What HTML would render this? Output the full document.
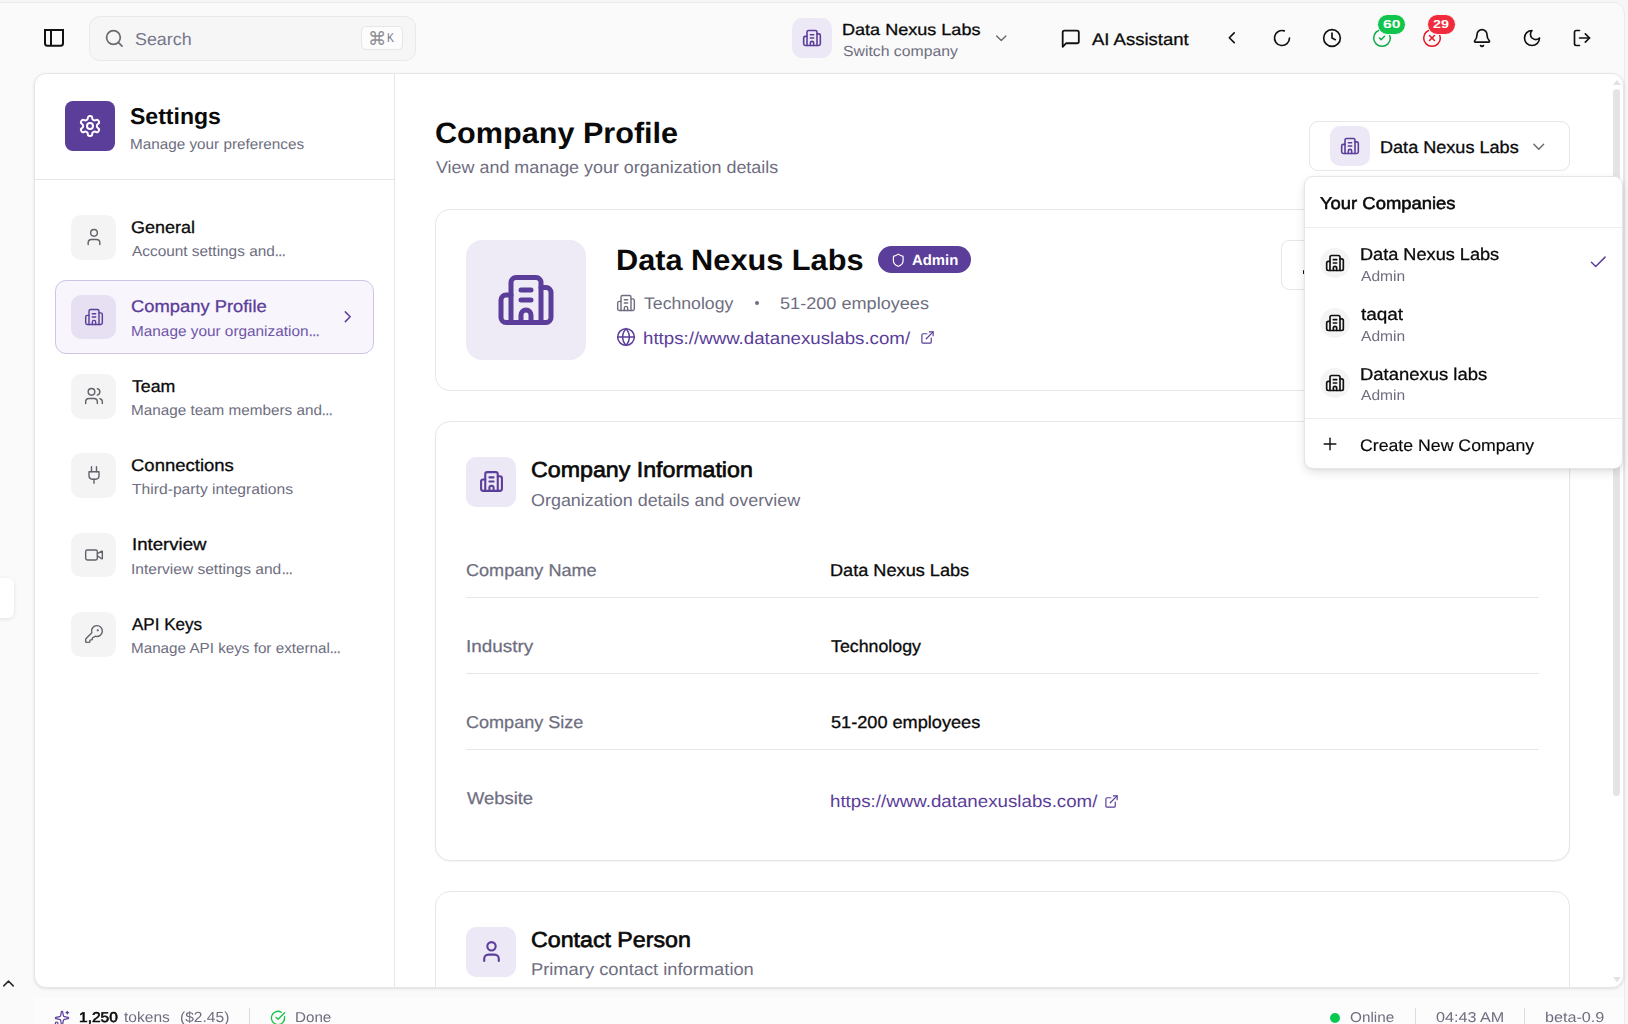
<!DOCTYPE html>
<html lang="en"><head><meta charset="utf-8"><title>Company Profile - Settings</title>
<style>
html,body{margin:0;padding:0;}
body{width:1628px;height:1024px;overflow:hidden;position:relative;background:#f6f6f6;font-family:"Liberation Sans",sans-serif;}
.frame{position:absolute;left:-12px;top:2px;width:1637px;height:1040px;border:1px solid #ebebed;border-radius:12px;background:#fafafa;box-sizing:border-box;}
.t{position:absolute;display:flex;align-items:baseline;white-space:nowrap;line-height:1;transform-origin:0 0;text-rendering:geometricPrecision;}
.t>i{display:block;width:0;height:30px;}
.layer{position:absolute;left:0;top:0;width:1628px;height:1024px;will-change:transform;}
.b{position:absolute;}
.i{position:absolute;display:block;overflow:visible;}
.clip{position:absolute;left:396px;top:74px;width:1226px;height:913px;overflow:hidden;}
.clip > *{margin-left:-396px;margin-top:-74px;}
</style></head><body>
<div class="frame"></div>
<svg class="i" style="left:40px;top:24px;color:#111" width="28" height="28" viewBox="40 24 28 28" fill="none" stroke="currentColor" stroke-width="2" stroke-linejoin="miter"><path d="M45 30H63V43.300a2.500 2.500 0 0 1-2.500 2.500H47.500a2.500 2.500 0 0 1-2.500-2.500Z"/><path d="M51 30V45.800"/></svg>
<div class="b" style="left:89px;top:16px;width:327px;height:45px;background:#f6f6f6;border:1px solid #e9e9eb;border-radius:11px;box-sizing:border-box;"></div>
<svg class="i" style="left:103.7px;top:27.8px;color:#6a6a70;" width="20.6" height="20.6" viewBox="0 0 24 24" fill="none" stroke="currentColor" stroke-width="2" stroke-linecap="round" stroke-linejoin="round"><circle cx="11" cy="11" r="8"/><path d="m21 21-4.3-4.3"/></svg>
<div class="t" style="left:135.04px;top:15px;font-size:17.3px;color:#75758a;transform:scaleX(1.0337);"><i></i>Search</div>
<div class="b" style="left:360.5px;top:25.5px;width:42px;height:24.5px;background:#fcfcfc;border:1px solid #e6e6e9;border-radius:5px;box-sizing:border-box;"></div>
<div class="t" style="left:367.90px;top:15px;font-size:18.5px;color:#8e8e96;transform:scaleX(0.9894);font-family:"DejaVu Sans",sans-serif;"><i></i>⌘</div>
<div class="t" style="left:387.44px;top:12px;font-size:12.8px;color:#75758a;transform:scaleX(0.8163);"><i></i>K</div>
<div class="b" style="left:792px;top:18px;width:40px;height:40px;background:#ece8f6;border-radius:10px;"></div>
<svg class="i" style="left:802px;top:28.2px;color:#5b3d9a;" width="20" height="20" viewBox="0 0 24 24" fill="none" stroke="currentColor" stroke-width="1.9" stroke-linecap="round" stroke-linejoin="round"><path d="M10 12h4"/><path d="M10 8h4"/><path d="M14 21v-3a2 2 0 0 0-4 0v3"/><path d="M6 10H4a2 2 0 0 0-2 2v7a2 2 0 0 0 2 2h16a2 2 0 0 0 2-2V9a2 2 0 0 0-2-2h-2"/><path d="M6 21V5a2 2 0 0 1 2-2h8a2 2 0 0 1 2 2v16"/></svg>
<div class="t" style="left:842.29px;top:5px;font-size:16px;color:#0a0a0a;transform:scaleX(1.1282);-webkit-text-stroke:0.3px currentColor;"><i></i>Data Nexus Labs</div>
<div class="t" style="left:842.51px;top:26px;font-size:14.6px;color:#6e6e80;transform:scaleX(1.0808);"><i></i>Switch company</div>
<svg class="i" style="left:991.75px;top:28.75px;color:#666;" width="18.5" height="18.5" viewBox="0 0 24 24" fill="none" stroke="currentColor" stroke-width="1.7" stroke-linecap="round" stroke-linejoin="round"><path d="m6 9 6 6 6-6"/></svg>
<svg class="i" style="left:1060.25px;top:27.65px;color:#111;" width="21.5" height="21.5" viewBox="0 0 24 24" fill="none" stroke="currentColor" stroke-width="2" stroke-linecap="round" stroke-linejoin="round"><path d="M21 15a2 2 0 0 1-2 2H7l-4 4V5a2 2 0 0 1 2-2h14a2 2 0 0 1 2 2z"/></svg>
<div class="t" style="left:1092.00px;top:15px;font-size:16.8px;color:#0a0a0a;transform:scaleX(1.1021);-webkit-text-stroke:0.3px currentColor;"><i></i>AI Assistant</div>
<svg class="i" style="left:1222.25px;top:28.25px;color:#111;" width="19.5" height="19.5" viewBox="0 0 24 24" fill="none" stroke="currentColor" stroke-width="2" stroke-linecap="round" stroke-linejoin="round"><path d="m15 18-6-6 6-6"/></svg>
<svg class="i" style="left:1272px;top:28px;color:#111;" width="20" height="20" viewBox="0 0 24 24" fill="none" stroke="currentColor" stroke-width="2" stroke-linecap="round" stroke-linejoin="round"><path d="M21 12a9 9 0 1 1-6.219-8.56"/></svg>
<svg class="i" style="left:1322px;top:28px;color:#111;" width="20" height="20" viewBox="0 0 24 24" fill="none" stroke="currentColor" stroke-width="2" stroke-linecap="round" stroke-linejoin="round"><circle cx="12" cy="12" r="10"/><path d="M12 6v6l4 2"/></svg>
<svg class="i" style="left:1372px;top:28px;color:#0cab45;" width="20" height="20" viewBox="0 0 24 24" fill="none" stroke="currentColor" stroke-width="1.8" stroke-linecap="round" stroke-linejoin="round"><circle cx="12" cy="12" r="10"/><path d="m9 12 2 2 4-4"/></svg>
<svg class="i" style="left:1422px;top:28px;color:#e81422;" width="20" height="20" viewBox="0 0 24 24" fill="none" stroke="currentColor" stroke-width="1.8" stroke-linecap="round" stroke-linejoin="round"><circle cx="12" cy="12" r="10"/><path d="m15 9-6 6"/><path d="m9 9 6 6"/></svg>
<svg class="i" style="left:1472px;top:28px;color:#111;" width="20" height="20" viewBox="0 0 24 24" fill="none" stroke="currentColor" stroke-width="2" stroke-linecap="round" stroke-linejoin="round"><path d="M10.268 21a2 2 0 0 0 3.464 0"/><path d="M3.262 15.326A1 1 0 0 0 4 17h16a1 1 0 0 0 .74-1.673C19.41 13.956 18 12.499 18 8A6 6 0 0 0 6 8c0 4.499-1.411 5.956-2.738 7.326"/></svg>
<svg class="i" style="left:1522px;top:28px;color:#111;" width="20" height="20" viewBox="0 0 24 24" fill="none" stroke="currentColor" stroke-width="2" stroke-linecap="round" stroke-linejoin="round"><path d="M12 3a6 6 0 0 0 9 9 9 9 0 1 1-9-9Z"/></svg>
<svg class="i" style="left:1572px;top:28px;color:#111;" width="20" height="20" viewBox="0 0 24 24" fill="none" stroke="currentColor" stroke-width="2" stroke-linecap="round" stroke-linejoin="round"><path d="M9 21H5a2 2 0 0 1-2-2V5a2 2 0 0 1 2-2h4"/><path d="m16 17 5-5-5-5"/><path d="M21 12H9"/></svg>
<div class="b" style="left:1377px;top:14px;width:29px;height:21px;background:#10c44c;border:1px solid #fafafa;border-radius:11px;box-sizing:border-box;"></div>
<div class="b" style="left:1427px;top:14px;width:29px;height:21px;background:#f02b3c;border:1px solid #fafafa;border-radius:11px;box-sizing:border-box;"></div>
<div class="t" style="left:1382.86px;top:-2px;font-size:11.6px;color:#fff;font-weight:700;transform:scaleX(1.3525);"><i></i>60</div>
<div class="t" style="left:1433.21px;top:-2px;font-size:11.6px;color:#fff;font-weight:700;transform:scaleX(1.2313);"><i></i>29</div>
<div class="b" style="left:34px;top:73px;width:1590px;height:915px;background:#fff;border:1px solid #e6e6e9;border-radius:12px;box-sizing:border-box;box-shadow:0 1px 3px rgba(0,0,0,.11);"></div>
<div class="b" style="left:394px;top:74px;width:1px;height:913px;background:#e6e6e9;"></div>
<div class="b" style="left:35px;top:179px;width:359px;height:1px;background:#e6e6e9;"></div>
<div class="b" style="left:65px;top:101px;width:50px;height:50px;background:#5b3d9a;border-radius:8px;"></div>
<svg class="i" style="left:78.2px;top:114.2px;color:#fff;" width="24" height="24" viewBox="0 0 24 24" fill="none" stroke="currentColor" stroke-width="2" stroke-linecap="round" stroke-linejoin="round"><path d="M12.22 2h-.44a2 2 0 0 0-2 2v.18a2 2 0 0 1-1 1.730l-.43.250a2 2 0 0 1-2 0l-.15-.08a2 2 0 0 0-2.73.73l-.22.38a2 2 0 0 0 .73 2.73l.15.1a2 2 0 0 1 1 1.720v.51a2 2 0 0 1-1 1.740l-.15.09a2 2 0 0 0-.73 2.73l.22.38a2 2 0 0 0 2.73.73l.15-.08a2 2 0 0 1 2 0l.43.25a2 2 0 0 1 1 1.730V20a2 2 0 0 0 2 2h.44a2 2 0 0 0 2-2v-.18a2 2 0 0 1 1-1.730l.43-.25a2 2 0 0 1 2 0l.15.08a2 2 0 0 0 2.73-.73l.22-.39a2 2 0 0 0-.73-2.73l-.15-.08a2 2 0 0 1-1-1.740v-.5a2 2 0 0 1 1-1.740l.15-.09a2 2 0 0 0 .73-2.73l-.22-.38a2 2 0 0 0-2.73-.73l-.15.08a2 2 0 0 1-2 0l-.43-.25a2 2 0 0 1-1-1.730V4a2 2 0 0 0-2-2z"/><circle cx="12" cy="12" r="3"/></svg>
<div class="t" style="left:130.34px;top:94px;font-size:22.8px;color:#0a0a0a;font-weight:700;transform:scaleX(1.0106);"><i></i>Settings</div>
<div class="t" style="left:130.11px;top:119px;font-size:14.6px;color:#6e6e80;transform:scaleX(1.0469);"><i></i>Manage your preferences</div>
<div class="b" style="left:71px;top:215px;width:45px;height:44.6px;background:#f4f4f5;border-radius:10px;"></div>
<svg class="i" style="left:83.8px;top:227.3px;color:#62626a;" width="20" height="20" viewBox="0 0 24 24" fill="none" stroke="currentColor" stroke-width="1.7" stroke-linecap="round" stroke-linejoin="round"><path d="M19 21v-2a4 4 0 0 0-4-4H9a4 4 0 0 0-4 4v2"/><circle cx="12" cy="7" r="4"/></svg>
<div class="t" style="left:131.06px;top:203px;font-size:17px;color:#0a0a0a;transform:scaleX(1.0570);-webkit-text-stroke:0.3px currentColor;"><i></i>General</div>
<div class="t" style="left:131.80px;top:226px;font-size:14.6px;color:#6e6e80;transform:scaleX(1.0540);"><i></i>Account settings and</div>
<div class="t" style="left:274.72px;top:226px;font-size:14.6px;color:#6e6e80;transform:scaleX(0.8548);-webkit-text-stroke:0.3px currentColor;"><i></i>...</div>
<div class="b" style="left:55px;top:280px;width:319px;height:73.5px;background:#f8f5fc;border:1px solid #cfc4e6;border-radius:11px;box-sizing:border-box;"></div>
<svg class="i" style="left:338.25px;top:307.45px;color:#5b3d9a;" width="19.5" height="19.5" viewBox="0 0 24 24" fill="none" stroke="currentColor" stroke-width="1.8" stroke-linecap="round" stroke-linejoin="round"><path d="m9 18 6-6-6-6"/></svg>
<div class="b" style="left:71px;top:294.5px;width:45px;height:44.6px;background:#e6e0f2;border-radius:10px;"></div>
<svg class="i" style="left:83.8px;top:306.8px;color:#5b3d9a;" width="20" height="20" viewBox="0 0 24 24" fill="none" stroke="currentColor" stroke-width="1.7" stroke-linecap="round" stroke-linejoin="round"><path d="M10 12h4"/><path d="M10 8h4"/><path d="M14 21v-3a2 2 0 0 0-4 0v3"/><path d="M6 10H4a2 2 0 0 0-2 2v7a2 2 0 0 0 2 2h16a2 2 0 0 0 2-2V9a2 2 0 0 0-2-2h-2"/><path d="M6 21V5a2 2 0 0 1 2-2h8a2 2 0 0 1 2 2v16"/></svg>
<div class="t" style="left:130.94px;top:282px;font-size:17px;color:#5b3d9a;transform:scaleX(1.0799);-webkit-text-stroke:0.3px currentColor;"><i></i>Company Profile</div>
<div class="t" style="left:130.90px;top:306px;font-size:14.6px;color:#6f55a8;transform:scaleX(1.0518);"><i></i>Manage your organization</div>
<div class="t" style="left:308.52px;top:306px;font-size:14.6px;color:#6f55a8;transform:scaleX(0.8548);-webkit-text-stroke:0.3px currentColor;"><i></i>...</div>
<div class="b" style="left:71px;top:374px;width:45px;height:44.6px;background:#f4f4f5;border-radius:10px;"></div>
<svg class="i" style="left:83.8px;top:386.3px;color:#62626a;" width="20" height="20" viewBox="0 0 24 24" fill="none" stroke="currentColor" stroke-width="1.7" stroke-linecap="round" stroke-linejoin="round"><path d="M16 21v-2a4 4 0 0 0-4-4H6a4 4 0 0 0-4 4v2"/><circle cx="9" cy="7" r="4"/><path d="M22 21v-2a4 4 0 0 0-3-3.870"/><path d="M16 3.130a4 4 0 0 1 0 7.750"/></svg>
<div class="t" style="left:131.62px;top:362px;font-size:17px;color:#0a0a0a;transform:scaleX(1.0439);-webkit-text-stroke:0.3px currentColor;"><i></i>Team</div>
<div class="t" style="left:130.91px;top:385px;font-size:14.6px;color:#6e6e80;transform:scaleX(1.0458);"><i></i>Manage team members and</div>
<div class="t" style="left:321.92px;top:385px;font-size:14.6px;color:#6e6e80;transform:scaleX(0.8548);-webkit-text-stroke:0.3px currentColor;"><i></i>...</div>
<div class="b" style="left:71px;top:453px;width:45px;height:44.6px;background:#f4f4f5;border-radius:10px;"></div>
<svg class="i" style="left:83.8px;top:465.3px;color:#62626a;" width="20" height="20" viewBox="0 0 24 24" fill="none" stroke="currentColor" stroke-width="1.7" stroke-linecap="round" stroke-linejoin="round"><path d="M12 22v-5"/><path d="M9 8V2"/><path d="M15 8V2"/><path d="M18 8v5a4 4 0 0 1-4 4h-4a4 4 0 0 1-4-4V8Z"/></svg>
<div class="t" style="left:131.03px;top:441px;font-size:17px;color:#0a0a0a;transform:scaleX(1.0883);-webkit-text-stroke:0.3px currentColor;"><i></i>Connections</div>
<div class="t" style="left:131.56px;top:464px;font-size:14.6px;color:#6e6e80;transform:scaleX(1.0734);"><i></i>Third-party integrations</div>
<div class="b" style="left:71px;top:532.5px;width:45px;height:44.6px;background:#f4f4f5;border-radius:10px;"></div>
<svg class="i" style="left:83.8px;top:544.8px;color:#62626a;" width="20" height="20" viewBox="0 0 24 24" fill="none" stroke="currentColor" stroke-width="1.7" stroke-linecap="round" stroke-linejoin="round"><path d="m16 13 5.223 3.482a.5.5 0 0 0 .777-.416V7.870a.5.5 0 0 0-.752-.432L16 10.500"/><rect x="2" y="6" width="14" height="12" rx="2"/></svg>
<div class="t" style="left:131.64px;top:520px;font-size:17px;color:#0a0a0a;transform:scaleX(1.0956);-webkit-text-stroke:0.3px currentColor;"><i></i>Interview</div>
<div class="t" style="left:131.29px;top:544px;font-size:14.6px;color:#6e6e80;transform:scaleX(1.0643);"><i></i>Interview settings and</div>
<div class="t" style="left:281.62px;top:544px;font-size:14.6px;color:#6e6e80;transform:scaleX(0.8548);-webkit-text-stroke:0.3px currentColor;"><i></i>...</div>
<div class="b" style="left:71px;top:612px;width:45px;height:44.6px;background:#f4f4f5;border-radius:10px;"></div>
<svg class="i" style="left:83.8px;top:624.3px;color:#62626a;" width="20" height="20" viewBox="0 0 24 24" fill="none" stroke="currentColor" stroke-width="1.7" stroke-linecap="round" stroke-linejoin="round"><path d="M2.586 17.414A2 2 0 0 0 2 18.828V21a1 1 0 0 0 1 1h3a1 1 0 0 0 1-1v-1a1 1 0 0 1 1-1h1a1 1 0 0 0 1-1v-1a1 1 0 0 1 1-1h.172a2 2 0 0 0 1.414-.586l.814-.814a6.500 6.500 0 1 0-4-4z"/><circle cx="16.500" cy="7.500" r=".5" fill="currentColor"/></svg>
<div class="t" style="left:131.90px;top:600px;font-size:17px;color:#0a0a0a;transform:scaleX(1.0016);-webkit-text-stroke:0.3px currentColor;"><i></i>API Keys</div>
<div class="t" style="left:130.91px;top:623px;font-size:14.6px;color:#6e6e80;transform:scaleX(1.0429);"><i></i>Manage API keys for external</div>
<div class="t" style="left:329.72px;top:623px;font-size:14.6px;color:#6e6e80;transform:scaleX(0.8548);-webkit-text-stroke:0.3px currentColor;"><i></i>...</div>
<div class="clip">
<div class="t" style="left:434.64px;top:113px;font-size:29.3px;color:#0a0a0a;font-weight:700;transform:scaleX(1.0443);"><i></i>Company Profile</div>
<div class="t" style="left:436.10px;top:143px;font-size:17.2px;color:#6e6e80;transform:scaleX(1.0422);"><i></i>View and manage your organization details</div>
<div class="b" style="left:1309px;top:121px;width:261px;height:50px;background:#fff;border:1px solid #e6e6e9;border-radius:9px;box-sizing:border-box;"></div>
<div class="b" style="left:1330px;top:126px;width:40px;height:40px;background:#ece8f6;border-radius:10px;"></div>
<svg class="i" style="left:1340px;top:136.2px;color:#5b3d9a;" width="20" height="20" viewBox="0 0 24 24" fill="none" stroke="currentColor" stroke-width="1.9" stroke-linecap="round" stroke-linejoin="round"><path d="M10 12h4"/><path d="M10 8h4"/><path d="M14 21v-3a2 2 0 0 0-4 0v3"/><path d="M6 10H4a2 2 0 0 0-2 2v7a2 2 0 0 0 2 2h16a2 2 0 0 0 2-2V9a2 2 0 0 0-2-2h-2"/><path d="M6 21V5a2 2 0 0 1 2-2h8a2 2 0 0 1 2 2v16"/></svg>
<div class="t" style="left:1379.99px;top:123px;font-size:17.2px;color:#0a0a0a;transform:scaleX(1.0518);-webkit-text-stroke:0.3px currentColor;"><i></i>Data Nexus Labs</div>
<svg class="i" style="left:1529.25px;top:136.65px;color:#666;" width="19.5" height="19.5" viewBox="0 0 24 24" fill="none" stroke="currentColor" stroke-width="1.7" stroke-linecap="round" stroke-linejoin="round"><path d="m6 9 6 6 6-6"/></svg>
<div class="b" style="left:435px;top:209px;width:1135px;height:182px;background:#fff;border:1px solid #e6e6e9;border-radius:15px;box-sizing:border-box;"></div>
<div class="b" style="left:466px;top:240px;width:120px;height:120px;background:#eeebf7;border-radius:16px;"></div>
<svg class="i" style="left:496px;top:270.1px;color:#5b3d9a;" width="60" height="60" viewBox="0 0 24 24" fill="none" stroke="currentColor" stroke-width="2" stroke-linecap="round" stroke-linejoin="round"><path d="M10 12h4"/><path d="M10 8h4"/><path d="M14 21v-3a2 2 0 0 0-4 0v3"/><path d="M6 10H4a2 2 0 0 0-2 2v7a2 2 0 0 0 2 2h16a2 2 0 0 0 2-2V9a2 2 0 0 0-2-2h-2"/><path d="M6 21V5a2 2 0 0 1 2-2h8a2 2 0 0 1 2 2v16"/></svg>
<div class="t" style="left:616.08px;top:240px;font-size:29.3px;color:#0a0a0a;font-weight:700;transform:scaleX(1.0485);"><i></i>Data Nexus Labs</div>
<div class="b" style="left:878px;top:246px;width:93px;height:27px;background:#5b3d9a;border-radius:14px;"></div>
<svg class="i" style="left:891.25px;top:252.55px;color:#fff;" width="14.5" height="14.5" viewBox="0 0 24 24" fill="none" stroke="currentColor" stroke-width="2" stroke-linecap="round" stroke-linejoin="round"><path d="M20 13c0 5-3.500 7.500-7.660 8.950a1 1 0 0 1-.670-.010C7.500 20.500 4 18 4 13V6a1 1 0 0 1 1-1c2 0 4.500-1.200 6.240-2.720a1.170 1.170 0 0 1 1.520 0C14.510 3.810 17 5 19 5a1 1 0 0 1 1 1z"/></svg>
<div class="t" style="left:911.97px;top:235px;font-size:14.8px;color:#fff;font-weight:700;transform:scaleX(1.0046);"><i></i>Admin</div>
<svg class="i" style="left:615.9px;top:292.7px;color:#6e6e80;" width="20" height="20" viewBox="0 0 24 24" fill="none" stroke="currentColor" stroke-width="1.7" stroke-linecap="round" stroke-linejoin="round"><path d="M10 12h4"/><path d="M10 8h4"/><path d="M14 21v-3a2 2 0 0 0-4 0v3"/><path d="M6 10H4a2 2 0 0 0-2 2v7a2 2 0 0 0 2 2h16a2 2 0 0 0 2-2V9a2 2 0 0 0-2-2h-2"/><path d="M6 21V5a2 2 0 0 1 2-2h8a2 2 0 0 1 2 2v16"/></svg>
<div class="t" style="left:644.02px;top:279px;font-size:16.8px;color:#6e6e80;transform:scaleX(1.0516);"><i></i>Technology</div>
<div class="b" style="left:755.2px;top:301.2px;width:4px;height:4px;background:#6e6e80;border-radius:2px;"></div>
<div class="t" style="left:780.13px;top:279px;font-size:16.8px;color:#6e6e80;transform:scaleX(1.0789);"><i></i>51-200 employees</div>
<svg class="i" style="left:615.9px;top:327.1px;color:#5b3d9a;" width="20" height="20" viewBox="0 0 24 24" fill="none" stroke="currentColor" stroke-width="1.8" stroke-linecap="round" stroke-linejoin="round"><circle cx="12" cy="12" r="10"/><path d="M12 2a14.500 14.500 0 0 0 0 20 14.500 14.500 0 0 0 0-20"/><path d="M2 12h20"/></svg>
<div class="t" style="left:643.43px;top:314px;font-size:17.2px;color:#5b3d9a;transform:scaleX(1.0880);"><i></i>https://www.datanexuslabs.com/</div>
<svg class="i" style="left:920.3px;top:329.9px;color:#5b3d9a;" width="15" height="15" viewBox="0 0 24 24" fill="none" stroke="currentColor" stroke-width="1.9" stroke-linecap="round" stroke-linejoin="round"><path d="M15 3h6v6"/><path d="M10 14 21 3"/><path d="M18 13v6a2 2 0 0 1-2 2H5a2 2 0 0 1-2-2V8a2 2 0 0 1 2-2h6"/></svg>
<div class="b" style="left:1281px;top:240px;width:120px;height:50px;background:#fff;border:1px solid #e6e6e9;border-radius:8px;box-sizing:border-box;"></div>
<div class="b" style="left:1302.9px;top:269.5px;width:1.4px;height:4.5px;background:#111;border-radius:1px;"></div>
<div class="b" style="left:435px;top:421px;width:1135px;height:440px;background:#fff;border:1px solid #e6e6e9;border-radius:15px;box-sizing:border-box;box-shadow:0 1px 2px rgba(0,0,0,.05);"></div>
<div class="b" style="left:466px;top:457px;width:50px;height:50px;background:#ece8f6;border-radius:10px;"></div>
<svg class="i" style="left:478.9px;top:469px;color:#5b3d9a;" width="25" height="25" viewBox="0 0 24 24" fill="none" stroke="currentColor" stroke-width="2" stroke-linecap="round" stroke-linejoin="round"><path d="M10 12h4"/><path d="M10 8h4"/><path d="M14 21v-3a2 2 0 0 0-4 0v3"/><path d="M6 10H4a2 2 0 0 0-2 2v7a2 2 0 0 0 2 2h16a2 2 0 0 0 2-2V9a2 2 0 0 0-2-2h-2"/><path d="M6 21V5a2 2 0 0 1 2-2h8a2 2 0 0 1 2 2v16"/></svg>
<div class="t" style="left:531.01px;top:447px;font-size:21.6px;color:#0a0a0a;transform:scaleX(1.0745);-webkit-text-stroke:0.65px currentColor;"><i></i>Company Information</div>
<div class="t" style="left:531.16px;top:476px;font-size:17.2px;color:#6e6e80;transform:scaleX(1.0433);"><i></i>Organization details and overview</div>
<div class="t" style="left:465.55px;top:546px;font-size:17.2px;color:#6e6e80;transform:scaleX(1.0516);-webkit-text-stroke:0.25px currentColor;"><i></i>Company Name</div>
<div class="t" style="left:830.28px;top:546px;font-size:17.2px;color:#0a0a0a;transform:scaleX(1.0557);-webkit-text-stroke:0.3px currentColor;"><i></i>Data Nexus Labs</div>
<div class="b" style="left:466px;top:597px;width:1073px;height:1px;background:#e6e6e9;"></div>
<div class="t" style="left:466.22px;top:622px;font-size:17.2px;color:#6e6e80;transform:scaleX(1.1013);-webkit-text-stroke:0.25px currentColor;"><i></i>Industry</div>
<div class="t" style="left:830.82px;top:622px;font-size:17.2px;color:#0a0a0a;transform:scaleX(1.0340);-webkit-text-stroke:0.3px currentColor;"><i></i>Technology</div>
<div class="b" style="left:466px;top:673px;width:1073px;height:1px;background:#e6e6e9;"></div>
<div class="t" style="left:465.55px;top:698px;font-size:17.2px;color:#6e6e80;transform:scaleX(1.0503);-webkit-text-stroke:0.25px currentColor;"><i></i>Company Size</div>
<div class="t" style="left:830.53px;top:698px;font-size:17.2px;color:#0a0a0a;transform:scaleX(1.0553);-webkit-text-stroke:0.3px currentColor;"><i></i>51-200 employees</div>
<div class="b" style="left:466px;top:749px;width:1073px;height:1px;background:#e6e6e9;"></div>
<div class="t" style="left:466.70px;top:774px;font-size:17.2px;color:#6e6e80;transform:scaleX(1.0700);-webkit-text-stroke:0.25px currentColor;"><i></i>Website</div>
<div class="t" style="left:830.13px;top:777px;font-size:17.2px;color:#5b3d9a;transform:scaleX(1.0892);"><i></i>https://www.datanexuslabs.com/</div>
<svg class="i" style="left:1104px;top:793.5px;color:#5b3d9a;" width="15" height="15" viewBox="0 0 24 24" fill="none" stroke="currentColor" stroke-width="1.9" stroke-linecap="round" stroke-linejoin="round"><path d="M15 3h6v6"/><path d="M10 14 21 3"/><path d="M18 13v6a2 2 0 0 1-2 2H5a2 2 0 0 1-2-2V8a2 2 0 0 1 2-2h6"/></svg>
<div class="b" style="left:435px;top:891px;width:1135px;height:300px;background:#fff;border:1px solid #e6e6e9;border-radius:15px;box-sizing:border-box;"></div>
<div class="b" style="left:466px;top:927px;width:50px;height:50px;background:#ece8f6;border-radius:10px;"></div>
<svg class="i" style="left:478.9px;top:939.3px;color:#5b3d9a;" width="25" height="25" viewBox="0 0 24 24" fill="none" stroke="currentColor" stroke-width="2" stroke-linecap="round" stroke-linejoin="round"><path d="M19 21v-2a4 4 0 0 0-4-4H9a4 4 0 0 0-4 4v2"/><circle cx="12" cy="7" r="4"/></svg>
<div class="t" style="left:530.81px;top:917px;font-size:21.6px;color:#0a0a0a;transform:scaleX(1.0740);-webkit-text-stroke:0.65px currentColor;"><i></i>Contact Person</div>
<div class="t" style="left:530.87px;top:945px;font-size:17.2px;color:#6e6e80;transform:scaleX(1.0651);"><i></i>Primary contact information</div>
</div>
<div class="b" style="left:1613px;top:89px;width:7px;height:707px;background:#e4e4e7;border-radius:3.5px;"></div>
<div class="b" style="left:1612.5px;top:79.500px;width:0;height:0;border-left:4px solid transparent;border-right:4px solid transparent;border-bottom:5.5px solid #e2e2e5;"></div>
<div class="b" style="left:1612.5px;top:977px;width:0;height:0;border-left:4px solid transparent;border-right:4px solid transparent;border-top:5.5px solid #e2e2e5;"></div>
<div class="layer">
<div class="b" style="left:1304px;top:176px;width:319px;height:293px;background:#fff;border:1px solid #e6e6e9;border-radius:9px;box-sizing:border-box;box-shadow:0 4px 10px rgba(0,0,0,.10),0 1px 3px rgba(0,0,0,.06);"></div>
<div class="t" style="left:1320.01px;top:179px;font-size:17.2px;color:#0a0a0a;transform:scaleX(1.0722);-webkit-text-stroke:0.55px currentColor;"><i></i>Your Companies</div>
<div class="b" style="left:1305px;top:227px;width:317px;height:1px;background:#ededf0;"></div>
<div class="b" style="left:1320px;top:248px;width:30px;height:30px;background:#f4f4f5;border-radius:15px;"></div>
<svg class="i" style="left:1325px;top:253px;color:#111;" width="20" height="20" viewBox="0 0 24 24" fill="none" stroke="currentColor" stroke-width="2" stroke-linecap="round" stroke-linejoin="round"><path d="M10 12h4"/><path d="M10 8h4"/><path d="M14 21v-3a2 2 0 0 0-4 0v3"/><path d="M6 10H4a2 2 0 0 0-2 2v7a2 2 0 0 0 2 2h16a2 2 0 0 0 2-2V9a2 2 0 0 0-2-2h-2"/><path d="M6 21V5a2 2 0 0 1 2-2h8a2 2 0 0 1 2 2v16"/></svg>
<div class="t" style="left:1359.78px;top:230px;font-size:17.2px;color:#0a0a0a;transform:scaleX(1.0557);-webkit-text-stroke:0.3px currentColor;"><i></i>Data Nexus Labs</div>
<div class="t" style="left:1360.50px;top:251px;font-size:14.6px;color:#6e6e80;transform:scaleX(1.0675);"><i></i>Admin</div>
<div class="b" style="left:1320px;top:308px;width:30px;height:30px;background:#f4f4f5;border-radius:15px;"></div>
<svg class="i" style="left:1325px;top:313px;color:#111;" width="20" height="20" viewBox="0 0 24 24" fill="none" stroke="currentColor" stroke-width="2" stroke-linecap="round" stroke-linejoin="round"><path d="M10 12h4"/><path d="M10 8h4"/><path d="M14 21v-3a2 2 0 0 0-4 0v3"/><path d="M6 10H4a2 2 0 0 0-2 2v7a2 2 0 0 0 2 2h16a2 2 0 0 0 2-2V9a2 2 0 0 0-2-2h-2"/><path d="M6 21V5a2 2 0 0 1 2-2h8a2 2 0 0 1 2 2v16"/></svg>
<div class="t" style="left:1361.20px;top:290px;font-size:17.2px;color:#0a0a0a;transform:scaleX(1.1014);-webkit-text-stroke:0.3px currentColor;"><i></i>taqat</div>
<div class="t" style="left:1360.50px;top:311px;font-size:14.6px;color:#6e6e80;transform:scaleX(1.0675);"><i></i>Admin</div>
<div class="b" style="left:1320px;top:368px;width:30px;height:30px;background:#f4f4f5;border-radius:15px;"></div>
<svg class="i" style="left:1325px;top:373px;color:#111;" width="20" height="20" viewBox="0 0 24 24" fill="none" stroke="currentColor" stroke-width="2" stroke-linecap="round" stroke-linejoin="round"><path d="M10 12h4"/><path d="M10 8h4"/><path d="M14 21v-3a2 2 0 0 0-4 0v3"/><path d="M6 10H4a2 2 0 0 0-2 2v7a2 2 0 0 0 2 2h16a2 2 0 0 0 2-2V9a2 2 0 0 0-2-2h-2"/><path d="M6 21V5a2 2 0 0 1 2-2h8a2 2 0 0 1 2 2v16"/></svg>
<div class="t" style="left:1359.76px;top:350px;font-size:17.2px;color:#0a0a0a;transform:scaleX(1.0730);-webkit-text-stroke:0.3px currentColor;"><i></i>Datanexus labs</div>
<div class="t" style="left:1360.50px;top:370px;font-size:14.6px;color:#6e6e80;transform:scaleX(1.0675);"><i></i>Admin</div>
<svg class="i" style="left:1587.65px;top:252.45px;color:#5b3d9a;" width="20.5" height="20.5" viewBox="0 0 24 24" fill="none" stroke="currentColor" stroke-width="1.7" stroke-linecap="round" stroke-linejoin="round"><path d="M20 6 9 17l-5-5"/></svg>
<div class="b" style="left:1305px;top:418px;width:317px;height:1px;background:#ededf0;"></div>
<svg class="i" style="left:1320.2px;top:434.2px;color:#111;" width="20" height="20" viewBox="0 0 24 24" fill="none" stroke="currentColor" stroke-width="1.7" stroke-linecap="round" stroke-linejoin="round"><path d="M5 12h14"/><path d="M12 5v14"/></svg>
<div class="t" style="left:1359.77px;top:421px;font-size:16.8px;color:#0a0a0a;transform:scaleX(1.0548);-webkit-text-stroke:0.15px currentColor;"><i></i>Create New Company</div>
</div>
<div class="layer">
<div class="b" style="left:34px;top:998px;width:1590px;height:26px;background:#fcfcfc;"></div>
<svg class="i" style="left:53.6px;top:1009.6px;color:#5b3d9a;" width="16" height="16" viewBox="0 0 24 24" fill="none" stroke="currentColor" stroke-width="1.8" stroke-linecap="round" stroke-linejoin="round"><path d="M11.017 2.814a1 1 0 0 1 1.966 0l1.051 5.558a2 2 0 0 0 1.594 1.594l5.558 1.051a1 1 0 0 1 0 1.966l-5.558 1.051a2 2 0 0 0-1.594 1.594l-1.051 5.558a1 1 0 0 1-1.966 0l-1.051-5.558a2 2 0 0 0-1.594-1.594l-5.558-1.051a1 1 0 0 1 0-1.966l5.558-1.051a2 2 0 0 0 1.594-1.594z"/><path d="M20 2v4"/><path d="M22 4h-4"/><circle cx="4" cy="20" r="2"/></svg>
<div class="t" style="left:79.33px;top:992px;font-size:14.2px;color:#0a0a0a;transform:scaleX(1.0935);-webkit-text-stroke:0.6px currentColor;"><i></i>1,250</div>
<div class="t" style="left:124.40px;top:992px;font-size:14.6px;color:#6e6e80;transform:scaleX(1.0667);"><i></i>tokens</div>
<div class="t" style="left:180.17px;top:992px;font-size:14.6px;color:#6e6e80;transform:scaleX(1.0665);"><i></i>($2.45)</div>
<div class="b" style="left:249px;top:1008px;width:1px;height:16px;background:#dcdce0;"></div>
<svg class="i" style="left:269.500px;top:1009.600px;color:#16c24a" width="16" height="16" viewBox="0 0 24 24" fill="none" stroke="currentColor" stroke-width="2" stroke-linecap="round" stroke-linejoin="round"><path d="M21.801 10A10 10 0 1 1 17 3.335"/><path d="m9 11 3 3L22 4"/></svg>
<div class="t" style="left:294.81px;top:992px;font-size:14.2px;color:#6e6e80;transform:scaleX(1.0694);"><i></i>Done</div>
<div class="b" style="left:1330px;top:1013px;width:10px;height:10px;background:#08c950;border-radius:5px;"></div>
<div class="t" style="left:1350.18px;top:992px;font-size:14.2px;color:#6e6e80;transform:scaleX(1.0777);"><i></i>Online</div>
<div class="b" style="left:1415px;top:1008px;width:1px;height:16px;background:#dcdce0;"></div>
<div class="t" style="left:1435.89px;top:992px;font-size:14.2px;color:#6e6e80;transform:scaleX(1.1383);"><i></i>04:43 AM</div>
<div class="b" style="left:1524px;top:1008px;width:1px;height:16px;background:#dcdce0;"></div>
<div class="t" style="left:1545.09px;top:992px;font-size:14.2px;color:#6e6e80;transform:scaleX(1.1393);"><i></i>beta-0.9</div>
</div>
<svg class="i" style="left:-1px;top:973.5px;color:#2a2a30;" width="19" height="19" viewBox="0 0 24 24" fill="none" stroke="currentColor" stroke-width="1.9" stroke-linecap="round" stroke-linejoin="round"><path d="m18 15-6-6-6 6"/></svg>
<div class="b" style="left:-6px;top:578px;width:20px;height:40px;background:#fff;border-radius:6px;box-shadow:0 1px 4px rgba(0,0,0,.10);"></div>
</body></html>
